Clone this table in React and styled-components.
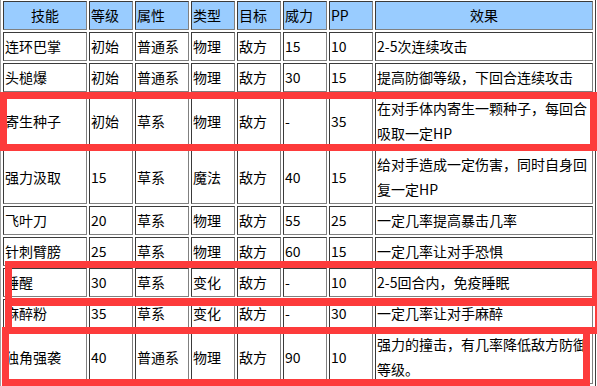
import styled, { createGlobalStyle } from "styled-components";

const Global = createGlobalStyle`
  html, body {
    margin: 0;
    padding: 0;
    background: #fff;
    overflow: hidden;
  }
  body {
    font-family: "Noto Sans CJK SC", "Noto Sans", sans-serif;
  }
`;

const Page = styled.div`
  position: relative;
  width: 597px;
  height: 386px;
  overflow: hidden;
`;

const Table = styled.table`
  margin: -2px 0 0 0;
  width: 596px;
  table-layout: fixed;
  border-collapse: separate;
  border-spacing: 2px;
  border: 1px solid;
  border-color: #a0a0a0 #404040 #404040 #a0a0a0;
  font-size: 14px;
  color: #000;
`;

const Head = styled.th`
  box-sizing: border-box;
  width: ${(p) => p.$w}px;
  height: 29px;
  padding: 1px;
  border: 1px solid;
  border-color: #3a3a3a #808080 #808080 #3a3a3a;
  background: #99ccff;
  font-weight: normal;
  line-height: 25px;
  text-align: ${(p) => (p.$center ? "center" : "left")};
  vertical-align: middle;
`;

const Cell = styled.td`
  box-sizing: border-box;
  height: 29px;
  padding: 1px;
  border: 1px solid;
  border-color: #3a3a3a #808080 #808080 #3a3a3a;
  line-height: 25px;
  text-align: left;
  vertical-align: middle;
  word-break: break-all;
`;

const Mark = styled.div`
  position: absolute;
  box-sizing: border-box;
  left: ${(p) => p.$x}px;
  top: ${(p) => p.$y}px;
  width: ${(p) => p.$w}px;
  height: ${(p) => p.$h}px;
  border: 7px solid #fd3b3b;
  pointer-events: none;
`;

const columns = [
  { label: "技能", w: 84, center: true },
  { label: "等级", w: 44 },
  { label: "属性", w: 54 },
  { label: "类型", w: 44 },
  { label: "目标", w: 44 },
  { label: "威力", w: 44 },
  { label: "PP", w: 44 },
  { label: "效果", w: 218, center: true },
];

const rows = [
  ["连环巴掌", "初始", "普通系", "物理", "敌方", "15", "10", "2-5次连续攻击"],
  ["头槌爆", "初始", "普通系", "物理", "敌方", "30", "15", "提高防御等级，下回合连续攻击"],
  ["寄生种子", "初始", "草系", "物理", "敌方", "-", "35", "在对手体内寄生一颗种子，每回合吸取一定HP"],
  ["强力汲取", "15", "草系", "魔法", "敌方", "40", "15", "给对手造成一定伤害，同时自身回复一定HP"],
  ["飞叶刀", "20", "草系", "物理", "敌方", "55", "25", "一定几率提高暴击几率"],
  ["针刺臂膀", "25", "草系", "物理", "敌方", "60", "15", "一定几率让对手恐惧"],
  ["睡醒", "30", "草系", "变化", "敌方", "-", "10", "2-5回合内，免疫睡眠"],
  ["麻醉粉", "35", "草系", "变化", "敌方", "-", "30", "一定几率让对手麻醉"],
  ["独角强袭", "40", "普通系", "物理", "敌方", "90", "10", "强力的撞击，有几率降低敌方防御等级。"],
];

// red annotation frames drawn over the table
const marks = [
  { x: 0, y: 92, w: 597, h: 59 },
  { x: 5, y: 261, w: 594, h: 45 },
  { x: 5, y: 298, w: 597, h: 36 },
  { x: 2, y: 327, w: 588, h: 59 },
];

const App = () => {
  return (
    <Page>
      <Global />
      <Table>
        <thead>
          <tr>
            {columns.map((c) => (
              <Head key={c.label} $w={c.w} $center={c.center}>
                {c.label}
              </Head>
            ))}
          </tr>
        </thead>
        <tbody>
          {rows.map((r) => (
            <tr key={r[0]}>
              {r.map((v, i) => (
                <Cell key={i}>{v}</Cell>
              ))}
            </tr>
          ))}
        </tbody>
      </Table>
      {marks.map((m, i) => (
        <Mark key={i} $x={m.x} $y={m.y} $w={m.w} $h={m.h} />
      ))}
    </Page>
  );
};

export default App;
